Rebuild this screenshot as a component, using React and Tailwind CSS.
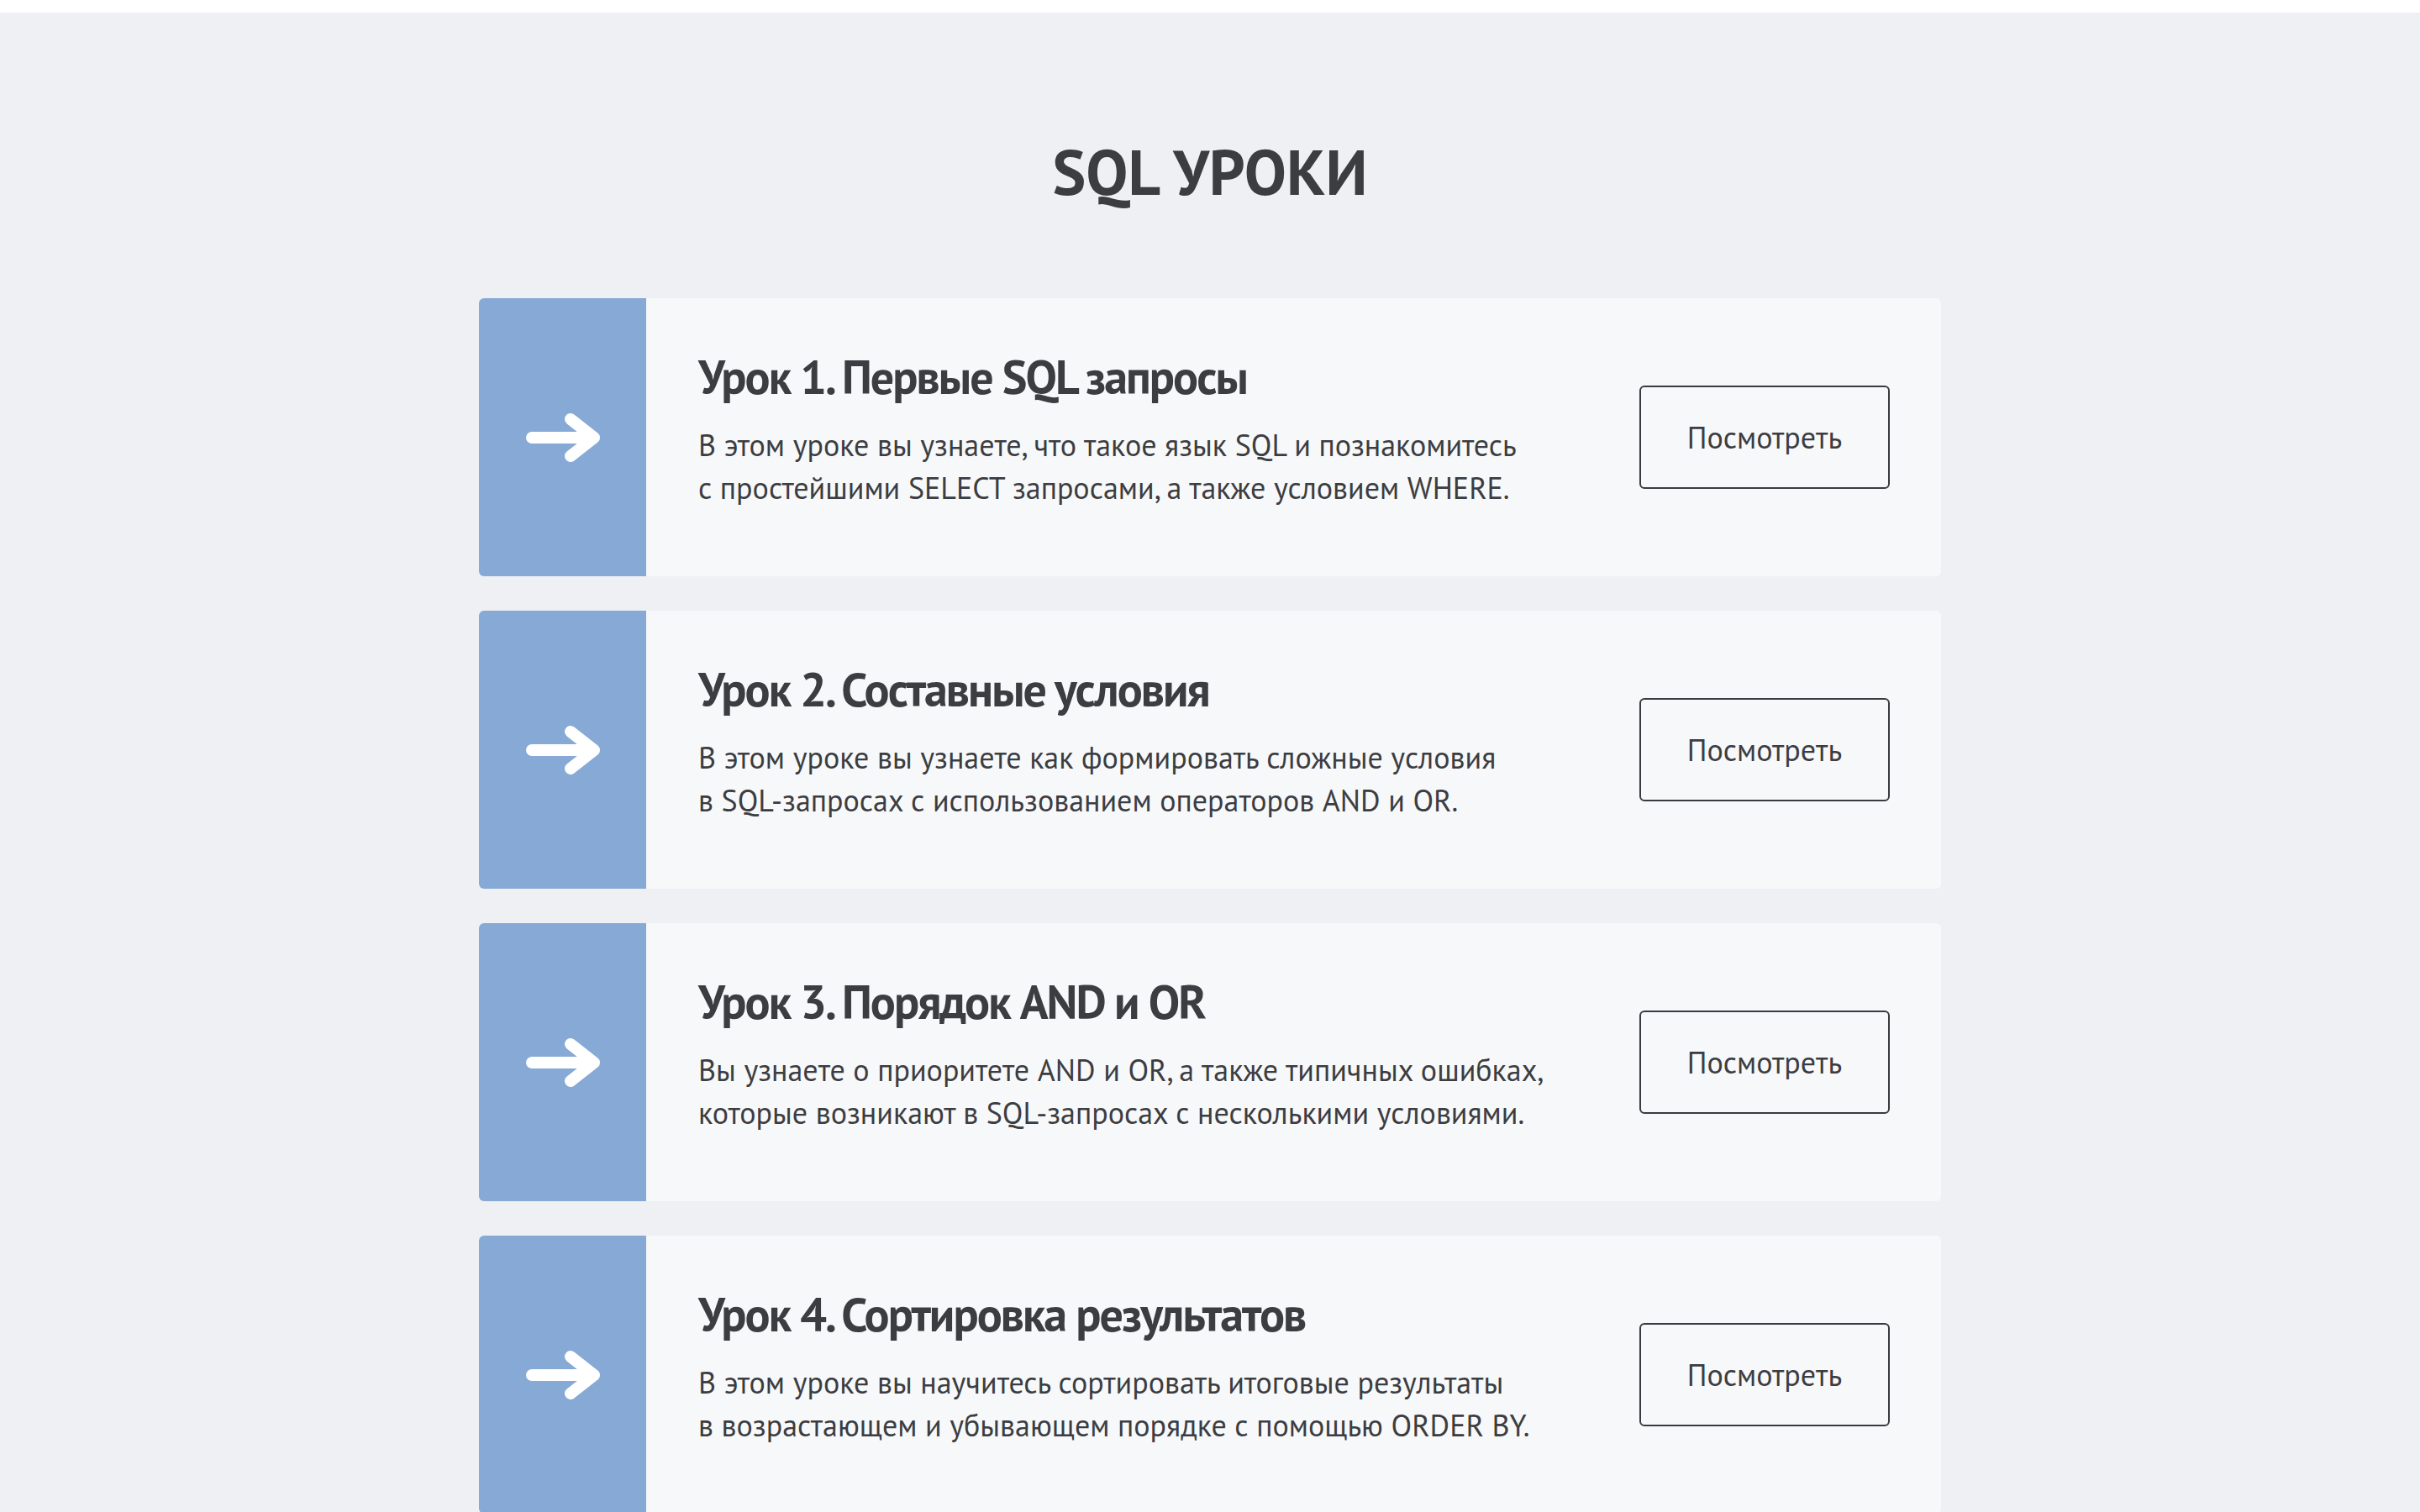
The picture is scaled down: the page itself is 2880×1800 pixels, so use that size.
const lessons = [
  {
    title: "Урок 1. Первые SQL запросы",
    lines: [
      "В этом уроке вы узнаете, что такое язык SQL и познакомитесь",
      "с простейшими SELECT запросами, а также условием WHERE.",
    ],
  },
  {
    title: "Урок 2. Составные условия",
    lines: [
      "В этом уроке вы узнаете как формировать сложные условия",
      "в SQL-запросах с использованием операторов AND и OR.",
    ],
  },
  {
    title: "Урок 3. Порядок AND и OR",
    lines: [
      "Вы узнаете о приоритете AND и OR, а также типичных ошибках,",
      "которые возникают в SQL-запросах с несколькими условиями.",
    ],
  },
  {
    title: "Урок 4. Сортировка результатов",
    lines: [
      "В этом уроке вы научитесь сортировать итоговые результаты",
      "в возрастающем и убывающем порядке с помощью ORDER BY.",
    ],
  },
];

function Arrow() {
  return (
    <svg width="90" height="60" viewBox="0 0 90 60" fill="none">
      <path
        d="M8 30H82M54 8L82 30L54 52"
        stroke="white"
        strokeWidth="14"
        strokeLinecap="round"
        strokeLinejoin="round"
      />
    </svg>
  );
}

function LessonCard({ lesson }) {
  return (
    <div className="flex h-[331px] overflow-hidden rounded-[6px] bg-[#f7f8fa]">
      {/* Blue arrow strip */}
      <div className="flex w-[199px] shrink-0 items-center justify-center bg-[#86a9d6]">
        <Arrow />
      </div>

      <div className="flex flex-1 items-center justify-between pl-[62px] pr-[61px]">
        <div className="pb-[20px]">
          <h2 className="text-[56px] font-bold leading-[1.2] tracking-[-2px]">{lesson.title}</h2>
          <p className="mt-[21px] text-[36px] leading-[51px]">
            {lesson.lines[0]}
            <br />
            {lesson.lines[1]}
          </p>
        </div>
        <button className="flex h-[123px] w-[298px] shrink-0 items-center justify-center rounded-[6px] border-2 border-[#3a3b3f] text-[36px] text-[#3c3d41]">
          Посмотреть
        </button>
      </div>
    </div>
  );
}

export default function App() {
  return (
    <div
      className="min-h-screen bg-[#eff0f4] text-[#3c3d41]"
      style={{ fontFamily: '"PT Sans", "Liberation Sans Narrow", Roboto, sans-serif' }}
    >
      {/* Thin white strip at the top */}
      <div className="h-[15px] bg-white" />

      <main className="mx-auto max-w-[1740px] pb-[60px]">
        <h1 className="pt-[152px] pb-[113px] text-center text-[75px] font-bold leading-none">SQL УРОКИ</h1>

        <div className="flex flex-col gap-[41px]">
          {lessons.map((lesson) => (
            <LessonCard key={lesson.title} lesson={lesson} />
          ))}
        </div>
      </main>
    </div>
  );
}
